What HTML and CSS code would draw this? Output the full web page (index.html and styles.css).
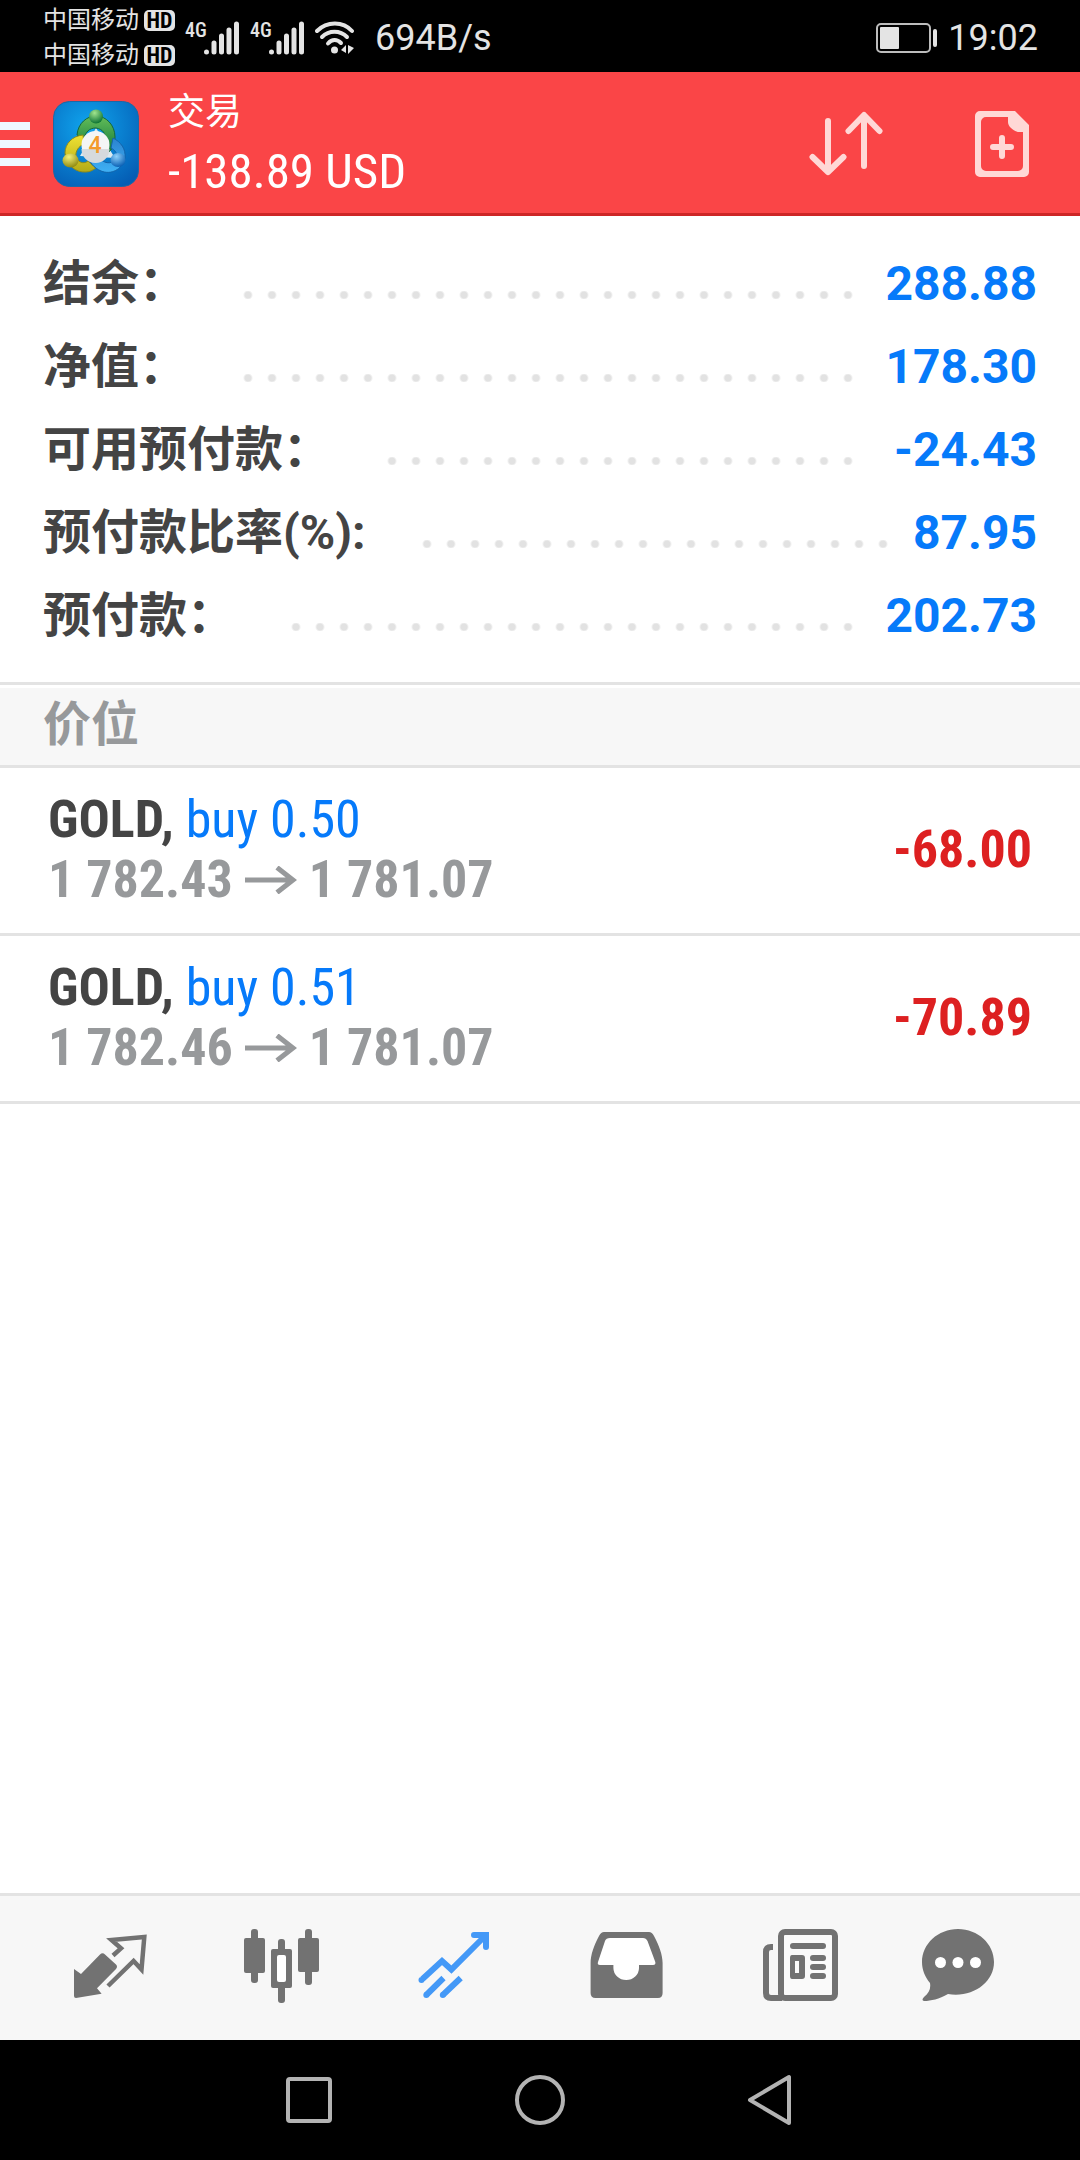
FILE: index.html
```html
<!DOCTYPE html>
<html lang="zh-CN">
<head>
<meta charset="utf-8">
<meta name="viewport" content="width=device-width, initial-scale=1">
<title>交易</title>
<link rel="stylesheet" href="styles.css">
</head>
<body>
<div class="screen">
  <div class="status">
    <div class="carriers">
      <div class="carrier"><span>中国移动</span><span class="hd">HD</span></div>
      <div class="carrier"><span>中国移动</span><span class="hd">HD</span></div>
    </div>
    <div class="signals">
      <div class="signal">
        <span class="signal-type">4G</span>
        <svg class="signal-bars" width="36" height="34" viewBox="0 0 36 34"><path d="M2.500 31v0M10 22v9M17.500 15v16M25 9v22M32.500 3v28" /></svg>
      </div>
      <div class="signal">
        <span class="signal-type">4G</span>
        <svg class="signal-bars" width="36" height="34" viewBox="0 0 36 34"><path d="M2.500 31v0M10 22v9M17.500 15v16M25 9v22M32.500 3v28" /></svg>
      </div>
      <svg class="wifi" width="40" height="34" viewBox="0 0 40 34">
        <g fill="none" stroke="#e4e4e4" stroke-width="4" stroke-linecap="round"><path d="M2 10C12 0 28 0 37 10"/><path d="M7 16C14 9 25 9 32 16"/><path d="M13 22.500C17 18 22 18 26 22"/></g>
        <circle cx="19.500" cy="29" r="3.500" fill="#e4e4e4"/>
        <path d="M31 24v8l-5-3zM33 24l6 3-6 6z" fill="#e4e4e4"/>
      </svg>
    </div>
    <span class="net-speed">694B/s</span>
    <svg class="battery" width="62" height="30" viewBox="0 0 62 30">
      <rect x="1" y="1" width="53" height="28" rx="4" fill="none" stroke="#bdbdbd" stroke-width="2"/>
      <rect x="4" y="4" width="19" height="22" rx="1" fill="#e4e4e4"/>
      <rect x="57" y="6" width="4" height="18" rx="2" fill="#e4e4e4"/>
    </svg>
    <time class="clock">19:02</time>
  </div>

  <header class="header">
    <button class="menu" type="button" aria-label="菜单"><span></span><span></span><span></span></button>
    <svg class="logo" width="86" height="86" viewBox="0 0 86 86">
      <defs>
        <radialGradient id="bg" cx="40%" cy="30%" r="80%"><stop offset="0" stop-color="#10a5ee"/><stop offset="1" stop-color="#045db4"/></radialGradient>
        <linearGradient id="gr" x1="0" y1="0" x2="0" y2="1"><stop offset="0" stop-color="#64bd58"/><stop offset="1" stop-color="#137a3d"/></linearGradient>
        <linearGradient id="ye" x1="0" y1="0" x2="0" y2="1"><stop offset="0" stop-color="#f0e233"/><stop offset="1" stop-color="#b3aa17"/></linearGradient>
        <linearGradient id="bl" x1="0" y1="0" x2="0" y2="1"><stop offset="0" stop-color="#2b83cf"/><stop offset="1" stop-color="#3fb1f5"/></linearGradient>
        <radialGradient id="gb" cx="40%" cy="25%" r="75%"><stop offset="0" stop-color="#a2e58e"/><stop offset="1" stop-color="#0d7434"/></radialGradient>
        <radialGradient id="yb" cx="40%" cy="25%" r="75%"><stop offset="0" stop-color="#f4f07a"/><stop offset="1" stop-color="#918b12"/></radialGradient>
        <radialGradient id="bb" cx="40%" cy="25%" r="75%"><stop offset="0" stop-color="#8dd0fb"/><stop offset="1" stop-color="#0b61b5"/></radialGradient>
      </defs>
      <rect x="0.500" y="0.500" width="85" height="85" rx="16" fill="url(#bg)" stroke="#1f67a4"/>
      <path d="M27 55L43 27L62 57Z" fill="#dceaf0"/>
      <path d="M24 34C25 22 34 15 43 15C53 15 62 24 62 36C62 43 60 47 56 51L52 39C53 33 50 28 43 27C36 27 33 31 31 37Z" fill="url(#gr)" stroke="#14663a"/>
      <path d="M30 34C19 35 12 43 12 52C13 64 23 72 33 71C37 71 40 69 43 67L35 60C30 64 24 60 23 56C22 50 26 45 31 43Z" fill="url(#ye)" stroke="#8d8a1b"/>
      <path d="M60 37C68 41 73 48 72 57C69 69 58 74 48 70C41 67 36 61 35 55L44 53C48 61 55 64 61 60C66 56 64 50 58 47Z" fill="url(#bl)" stroke="#1264ab"/>
      <circle cx="43" cy="15.500" r="7" fill="url(#gb)"/>
      <ellipse cx="17.500" cy="59.500" rx="8" ry="7" fill="url(#yb)"/>
      <ellipse cx="65" cy="59" rx="7.500" ry="7" fill="url(#bb)"/>
      <circle cx="42.500" cy="44" r="14" fill="#f4f5f6"/>
      <path d="M28.500 48h28a14 14 0 0 1-28 0z" fill="#d6dadd"/>
      <text class="logo-digit" x="42" y="52" text-anchor="middle">4</text>
    </svg>
    <div class="titles">
      <h1 class="title">交易</h1>
      <div class="profit">-138.89 USD</div>
    </div>
    <button class="action" type="button" aria-label="排序">
      <svg width="76" height="66" viewBox="0 0 76 66"><path d="M19 10v50M3.500 46L19 61L34.500 46M55 55V5M39.500 20L55 4L70.500 20" fill="none" stroke="#ffd8d6" stroke-width="6" stroke-linecap="round" stroke-linejoin="round"/></svg>
    </button>
    <button class="action" type="button" aria-label="新订单">
      <svg width="54" height="66" viewBox="0 0 54 66"><path fill="#ffd8d6" fill-rule="evenodd" d="M5 0H40L54 14V61a5 5 0 0 1-5 5H5a5 5 0 0 1-5-5V5a5 5 0 0 1 5-5zM11 6a5 5 0 0 0-5 5V55a5 5 0 0 0 5 5H43a5 5 0 0 0 5-5V21H43C37 19 33 15 33 11V6z"/><path d="M27 27v18M18 36h18" stroke="#ffd8d6" stroke-width="6" stroke-linecap="round"/></svg>
    </button>
  </header>

  <main class="content">
    <dl class="account">
      <div class="account-row"><dt>结余：</dt><span class="leader"></span><dd>288.88</dd></div>
      <div class="account-row"><dt>净值：</dt><span class="leader"></span><dd>178.30</dd></div>
      <div class="account-row"><dt>可用预付款：</dt><span class="leader"></span><dd>-24.43</dd></div>
      <div class="account-row"><dt>预付款比率(%):</dt><span class="leader leader-long"></span><dd>87.95</dd></div>
      <div class="account-row"><dt>预付款：</dt><span class="leader"></span><dd>202.73</dd></div>
    </dl>
    <h2 class="section">价位</h2>
    <ul class="positions">
      <li class="position">
        <div class="position-info">
          <div><b class="symbol">GOLD,</b> <span class="side">buy 0.50</span></div>
          <div class="prices"><span>1 782.43</span><svg width="52" height="28" viewBox="0 0 52 28"><path d="M0 14h48M32 1.500L48 14L32 26.500" fill="none" stroke="#97999b" stroke-width="5"/></svg><span>1 781.07</span></div>
        </div>
        <div class="result">-68.00</div>
      </li>
      <li class="position">
        <div class="position-info">
          <div><b class="symbol">GOLD,</b> <span class="side">buy 0.51</span></div>
          <div class="prices"><span>1 782.46</span><svg width="52" height="28" viewBox="0 0 52 28"><path d="M0 14h48M32 1.500L48 14L32 26.500" fill="none" stroke="#97999b" stroke-width="5"/></svg><span>1 781.07</span></div>
        </div>
        <div class="result">-70.89</div>
      </li>
    </ul>
  </main>

  <nav class="tabs">
    <button type="button" aria-label="行情">
      <svg viewBox="0 0 96 96"><path d="M12 49L19 54L38 34.500Q40.500 32 43 34.500L54 44.500Q56 46.500 54 49L35 68.300L39.600 73.700L14 78Q12 78 12 76Z" fill="#727272"/><path d="M51 35.500L59 28.300L49.500 20L82.300 17L79.500 49.500L71.600 41L46 66" fill="none" stroke="#727272" stroke-width="4.500"/></svg>
    </button>
    <button type="button" aria-label="图表">
      <svg viewBox="0 0 96 96"><g fill="#727272"><rect x="17" y="9" width="7" height="54" rx="3"/><rect x="10" y="18" width="21" height="35" rx="2"/><rect x="44" y="19" width="7" height="64" rx="3"/><rect x="37" y="29" width="21" height="39" rx="2"/><rect x="71" y="9" width="7" height="56" rx="3"/><rect x="64" y="18" width="21" height="34" rx="2"/></g><rect x="43" y="35" width="9" height="27" rx="2" fill="#fff"/></svg>
    </button>
    <button type="button" aria-label="交易">
      <svg viewBox="0 0 96 96"><g fill="none" stroke="#4499f7" stroke-width="6"><path d="M16.500 59L36 41L45.400 49.500L80 15"/><path d="M68 15H80V27" stroke-linecap="round"/><path d="M20.300 75L37.500 58M36.800 75L54.700 58"/></g><g fill="#4499f7"><circle cx="15.500" cy="60" r="3"/><circle cx="20.300" cy="75" r="3"/><circle cx="36.800" cy="75" r="3"/></g></svg>
    </button>
    <button type="button" aria-label="历史">
      <svg viewBox="0 0 96 96"><path fill="#727272" d="M26 12H71Q74 12 76 16C81 25 84.600 35 84.600 43V73Q84.600 78 80 78H17.500Q12.600 78 12.600 73V43C12.600 35 16 25 21 16Q23 12 26 12Z"/><path fill="#fff" d="M32 18H65Q68 18 69.500 21L77.300 42Q78 45 75 45H61V48A12.800 12 0 0 1 35.400 48V45H22Q19 45 20 42L27 21Q28 18 32 18Z"/></svg>
    </button>
    <button type="button" aria-label="新闻">
      <svg viewBox="0 0 96 96"><g fill="none" stroke="#727272" stroke-width="6"><path d="M23 27H21Q16 27 16 32V73Q16 78 21 78H32"/><rect x="31" y="12" width="54" height="66" rx="4" fill="#fafafa"/></g><g fill="#727272"><rect x="40" y="23" width="36" height="6" rx="3"/><path fill-rule="evenodd" d="M42 35H52Q55 35 55 38V56Q55 59 52 59H42Q40 59 40 56V38Q40 35 42 35ZM45 41V53H49V41Z"/><rect x="60" y="35" width="16" height="6" rx="3"/><rect x="60" y="44" width="16" height="6" rx="3"/><rect x="60" y="53" width="16" height="6" rx="3"/></g></svg>
    </button>
    <button type="button" aria-label="消息">
      <svg viewBox="0 0 96 96"><path fill="#727272" d="M36 9C56 9 72 24 72 42C72 63 50 78 26 74C17 79 9 81 2 81Q-1 80 2 77C7 73 9 69 8 63C3 57 0 50 0 42C0 24 16 9 36 9Z"/><g fill="#fff"><circle cx="18.500" cy="42.500" r="5.500"/><circle cx="36" cy="42.500" r="5.500"/><circle cx="53.500" cy="42.500" r="5.500"/></g></svg>
    </button>
  </nav>

  <nav class="system">
    <button type="button" aria-label="最近任务"><svg viewBox="0 0 56 56"><rect x="7" y="7" width="42" height="42" rx="2"/></svg></button>
    <button type="button" aria-label="主屏幕"><svg viewBox="0 0 56 56"><circle cx="28" cy="28" r="23"/></svg></button>
    <button type="button" aria-label="返回"><svg viewBox="0 0 56 56"><path d="M46 5V51L7 28Z"/></svg></button>
  </nav>
</div>
</body>
</html>
```
FILE: styles.css
```css
* { box-sizing: border-box; }
body, h1, h2, dl, dd, ul { margin: 0; padding: 0; }
body {
  font-family: Roboto, "Noto Sans CJK SC", sans-serif;
  background: #fff;
  color: #444;
}
button { border: 0; padding: 0; background: none; display: flex; align-items: center; justify-content: center; }
svg { display: block; flex: none; }

.screen { min-height: 100vh; display: flex; flex-direction: column; }

.status {
  height: 72px;
  padding: 3px 42px 0 43px;
  background: #000;
  color: #e4e4e4;
  display: flex;
  align-items: center;
}
.carriers { display: flex; flex-direction: column; }
.carrier { height: 35px; display: flex; align-items: center; gap: 5px; font-size: 24px; line-height: 35px; }
.hd {
  width: 31px;
  height: 21px;
  border-radius: 5px;
  background: #e4e4e4;
  color: #000;
  font-family: "Roboto Condensed", Roboto, sans-serif;
  font-size: 22px;
  font-weight: 700;
  line-height: 21px;
  text-align: center;
}
.signals { display: flex; align-items: center; margin-left: 10px; gap: 10px; }
.signal { display: flex; align-items: flex-start; }
.signal-type {
  width: 19px;
  font-family: "Roboto Condensed", Roboto, sans-serif;
  font-size: 20px;
  font-weight: 500;
  line-height: 18px;
}
.signal-bars { fill: none; stroke: #e4e4e4; stroke-width: 5; stroke-linecap: round; }
.net-speed { margin-left: 20px; font-size: 36px; }
.battery { margin-left: auto; }
.clock { margin-left: 10px; font-size: 36px; }

.header {
  height: 144px;
  padding: 3px 51px 0 0;
  background: #fa4547;
  border-bottom: 3px solid #cd2626;
  color: #fff;
  display: flex;
  align-items: center;
}
.menu { flex-direction: column; gap: 10px; margin-right: 23px; }
.menu span { width: 30px; height: 8px; background: #eff8ff; }
.logo-digit { font-family: Roboto, sans-serif; font-size: 23px; font-weight: 500; fill: #f39a2c; }
.titles { flex: 1; margin-left: 29px; padding-top: 6px; }
.title { font-size: 37px; line-height: 50px; font-weight: 400; }
.profit {
  font-family: "Roboto Condensed", Roboto, sans-serif;
  font-size: 49px;
  line-height: 68px;
}
.action + .action { margin-left: 90px; }

.content { flex: 1; }
.account { padding: 26px 43px 25px; }
.account-row { height: 83px; display: flex; align-items: center; font-size: 48px; font-weight: 700; line-height: 83px; }
.account-row dd { color: #067afa; }
.leader {
  flex: 1;
  height: 8px;
  margin: 22px 28px 0 49px;
  background: radial-gradient(circle at 12px 4px, #e2e2e2 3px, transparent 5px) 0 0 / 24px 8px repeat-x;
}
.leader-long { margin-right: 22px; }

.section {
  padding: 0 43px;
  border-top: 3px solid #e3e3e3;
  border-bottom: 3px solid #e3e3e3;
  box-shadow: inset 0 3px #fff;
  background: #f7f7f7;
  color: #97999b;
  font-size: 48px;
  line-height: 80px;
}

.positions { list-style: none; }
.position {
  padding: 22px 48px 23px;
  border-bottom: 3px solid #e3e3e3;
  display: flex;
  justify-content: space-between;
  align-items: center;
  font-family: "Roboto Condensed", Roboto, sans-serif;
  font-size: 52px;
  line-height: 60px;
}
.side { color: #067afa; }
.prices { display: flex; align-items: center; gap: 12px; color: #97999b; font-weight: 700; }
.result { color: #dd2021; font-weight: 700; }

.tabs {
  height: 147px;
  padding: 0 24px;
  border-top: 3px solid #e3e3e3;
  background: #f7f7f7;
  display: grid;
  grid-template-columns: repeat(6, 1fr);
}
.tabs svg { width: 96px; height: 96px; }

.system { height: 120px; background: #000; display: flex; justify-content: center; }
.system button { width: 231px; }
.system svg { width: 56px; height: 56px; fill: none; stroke: #b3b3b3; stroke-width: 4; stroke-linejoin: round; }
```
